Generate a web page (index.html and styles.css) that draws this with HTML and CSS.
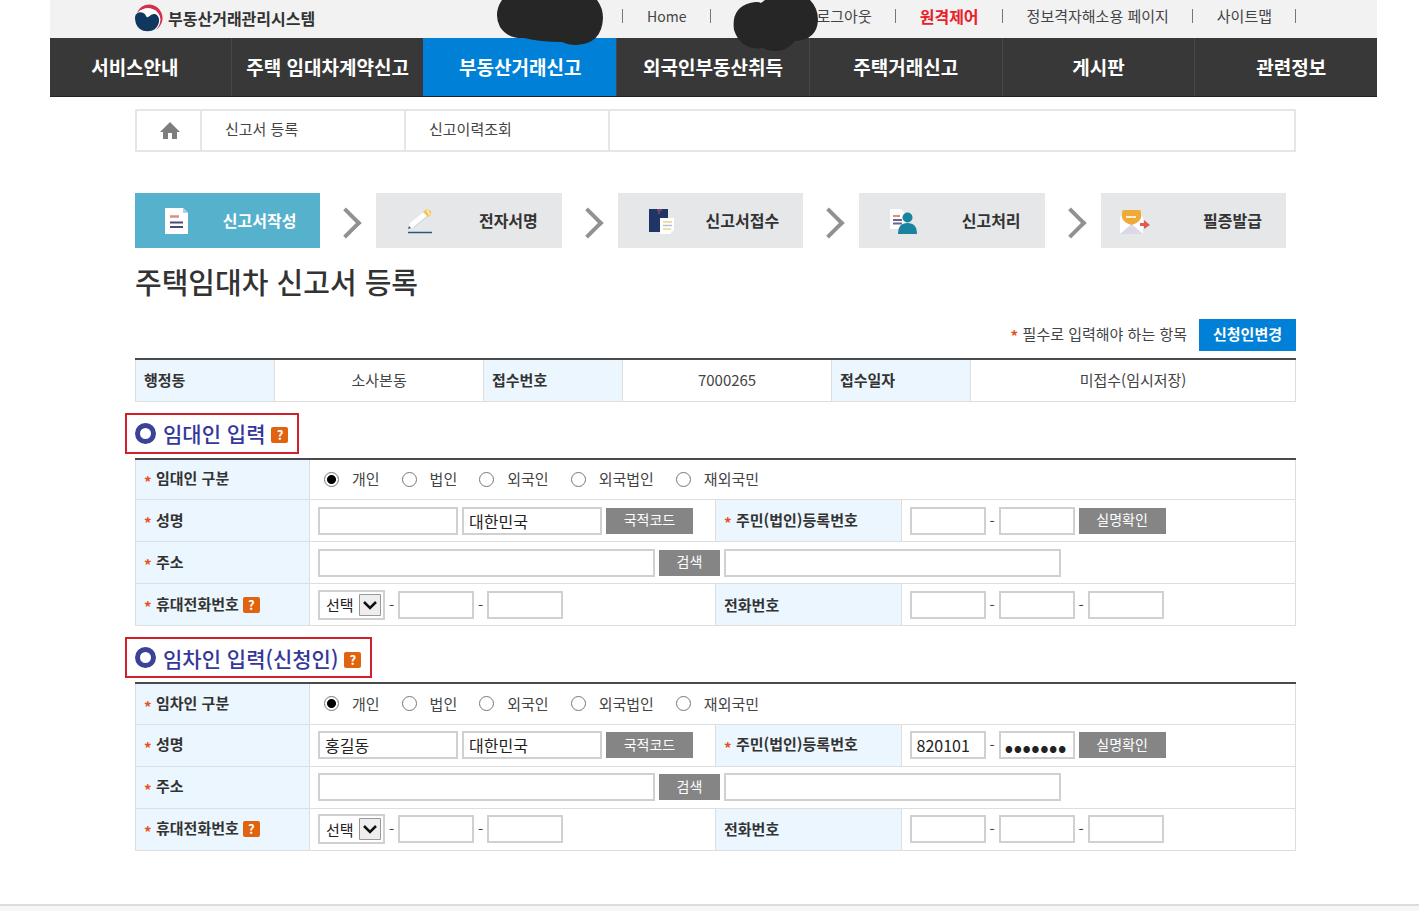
FILE: index.html
```
<!DOCTYPE html>
<html lang="ko">
<head>
	<meta charset="utf-8">
	<title>부동산거래관리시스템</title>
	<link rel="stylesheet" href="styles.css">
</head>
<body>
	<div class="page">
		<header class="top">
			<a class="logo" href="#">
				<svg width="28" height="28" viewBox="0 0 28 28">
					<path d="M2 9 C6 -1 18 -2 24 5 C30 12 28 21 21 26 C26 20 27 13 22 8 C17 3 8 3 2 9Z" fill="#d2304c"/>
					<path d="M3 9 C8 3 17 3 22 8 C27 13 26 20 21 25 L10 18Z" fill="#fff"/>
					<path d="M0 13 C1 7 9 7 11 12 C13 16 15 9 20 10 C26 12 25 21 20 25 C16 28 9 28 5 25 C1 22 0 17 0 13Z" fill="#10375f"/>
				</svg>
				<strong>부동산거래관리시스템</strong>
			</a>
			<ul class="links">
				<li class="user">
					<svg class="mask" width="108" height="46" viewBox="0 0 108 46"><path d="M6 0 H101 Q107 8 107 18 Q106 44 80 45 Q72 45 66 42 Q44 42 28 38 Q12 39 4 27 Q-3 13 6 0Z" fill="#262626"/></svg>
				</li>
				<li><a class="en" href="#">Home</a></li>
				<li class="logout">
					<svg class="mask" width="86" height="52" viewBox="0 0 86 52"><path d="M32 0 H77 Q85 8 85 20 Q84 40 62 41 Q54 51 42 51 Q34 51 30 48 Q8 51 1 30 Q-2 8 17 3 Q25 1 28 3Z" fill="#262626"/></svg>
					<a href="#">로그아웃</a>
				</li>
				<li><a class="remote" href="#">원격제어</a></li>
				<li><a href="#">정보격자해소용 페이지</a></li>
				<li><a href="#">사이트맵</a></li>
			</ul>
		</header>

		<nav class="menu">
			<ul>
				<li><a href="#">서비스안내</a></li>
				<li><a href="#">주택 임대차계약신고</a></li>
				<li class="on"><a href="#">부동산거래신고</a></li>
				<li><a href="#">외국인부동산취득</a></li>
				<li><a href="#">주택거래신고</a></li>
				<li><a href="#">게시판</a></li>
				<li><a href="#">관련정보</a></li>
			</ul>
		</nav>

		<main class="content">
			<div class="submenu">
				<a class="home" href="#" aria-label="홈">
					<svg width="20" height="18" viewBox="0 0 20 18"><path d="M10 0 L20 10 H17 V17 H12 V11 H8 V17 H3 V10 H0Z" fill="#7d7d7d"/></svg>
				</a>
				<a href="#">신고서 등록</a>
				<a href="#">신고이력조회</a>
			</div>

			<ol class="steps">
				<li class="on">
					<svg width="28" height="28" viewBox="0 0 28 28"><path d="M0 1 H18 L23 6 V27 H0Z" fill="#fff"/><path d="M18 1 V6 H23Z" fill="#a9d3e2"/><path d="M5 9.500 H14" stroke="#e58a83" stroke-width="2.500"/><path d="M5 15.500 H18 M5 20 H18" stroke="#4c4a78" stroke-width="2"/></svg>
					<span>신고서작성</span>
				</li>
				<li>
					<svg width="28" height="28" viewBox="0 0 28 28"><path d="M2 25.500 H26" stroke="#2d5480" stroke-width="1.500"/><path d="M2 22 L4 16 L19 4 L23 8 L8 20Z" fill="#fff"/><path d="M8 20 L23 8" stroke="#c9ced6"/><path d="M17 5 L21 2 L25 4 V8 L22 10Z" fill="#efc75a"/><path d="M21 3 L24 8" stroke="#fff1c0" stroke-width="1.500"/><path d="M2 22 L3 19 L5 21Z" fill="#2d5480"/></svg>
					<span>전자서명</span>
				</li>
				<li>
					<svg width="28" height="28" viewBox="0 0 28 28"><path d="M1 2 H20 V25 H1Z" fill="#1f3565"/><path d="M9 3 H14 M11 3 V7" stroke="#8c4963" stroke-width="1.500"/><path d="M12 11 H26 V23 L22 27 H12Z" fill="#fff"/><path d="M15 15 H24 M15 22 H23" stroke="#e9d48a" stroke-width="1.500"/><path d="M15 18.500 H24" stroke="#b8c0cc" stroke-width="1.500"/></svg>
					<span>신고서접수</span>
				</li>
				<li>
					<svg width="28" height="28" viewBox="0 0 28 28"><path d="M1 2 H12 L16 6 V22 H1Z" fill="#fff"/><path d="M4 9 H11" stroke="#e58a83" stroke-width="2"/><path d="M4 13 H13 M4 16.500 H13" stroke="#66678f" stroke-width="2"/><circle cx="18.500" cy="10.500" r="5" fill="#1a84a0"/><path d="M9 27 Q9 16 18.500 16 Q28 16 28 27Z" fill="#1a84a0"/></svg>
					<span>신고처리</span>
				</li>
				<li class="last">
					<svg width="32" height="28" viewBox="0 0 32 28"><path d="M1 10 L12 4 L24 10 V27 H1Z" fill="#fff"/><path d="M1 27 L12.500 17 L24 27Z" fill="#dcd8e6"/><path d="M3 5 Q3 3 5 3 H20 Q22 3 22 5 V11 Q20 16 12.500 18 Q5 16 3 11Z" fill="#f0aa3a"/><path d="M7 10 H17" stroke="#fff0cc" stroke-width="2"/><path d="M21 16 H25 V13 L31 18 L25 22 V19 H21Z" fill="#de5b52"/></svg>
					<span>필증발급</span>
				</li>
			</ol>

			<h1>주택임대차 신고서 등록</h1>

			<div class="note">
				<p><span class="req">*</span>필수로 입력해야 하는 항목</p>
				<button class="change" type="button">신청인변경</button>
			</div>

			<table class="info">
				<colgroup>
					<col class="w12"><col class="w18"><col class="w12"><col class="w18"><col class="w12"><col>
				</colgroup>
				<tr>
					<th>행정동</th>
					<td>소사본동</td>
					<th>접수번호</th>
					<td>7000265</td>
					<th>접수일자</th>
					<td>미접수(임시저장)</td>
				</tr>
			</table>

			<form action="">
				<h2><i class="ring"></i>임대인 입력<button class="help" type="button">?</button></h2>
				<table>
					<colgroup>
						<col class="w15"><col class="w35"><col class="w16"><col>
					</colgroup>
					<tr>
						<th><span class="req">*</span>임대인 구분</th>
						<td colspan="3">
							<div class="radios">
								<label><input type="radio" name="lessor" checked>개인</label>
								<label><input type="radio" name="lessor">법인</label>
								<label><input type="radio" name="lessor">외국인</label>
								<label><input type="radio" name="lessor">외국법인</label>
								<label><input type="radio" name="lessor">재외국민</label>
							</div>
						</td>
					</tr>
					<tr>
						<th><span class="req">*</span><label for="name1">성명</label></th>
						<td>
							<div class="field">
								<input class="mid" type="text" id="name1">
								<input class="mid" type="text" value="대한민국" aria-label="국적">
								<button class="btn" type="button">국적코드</button>
							</div>
						</td>
						<th><span class="req">*</span><label for="reg1">주민(법인)등록번호</label></th>
						<td>
							<div class="field">
								<input class="num" type="text" id="reg1"><span class="dash">-</span><input class="num" type="password" aria-label="등록번호 뒷자리">
								<button class="btn" type="button">실명확인</button>
							</div>
						</td>
					</tr>
					<tr>
						<th><span class="req">*</span><label for="addr1">주소</label></th>
						<td colspan="3">
							<div class="field">
								<input class="long" type="text" id="addr1">
								<button class="btn small" type="button">검색</button>
								<input class="long" type="text" aria-label="상세주소">
							</div>
						</td>
					</tr>
					<tr>
						<th><span class="req">*</span><label for="mobile1">휴대전화번호</label><button class="help" type="button">?</button></th>
						<td>
							<div class="field">
								<span class="select">
									<select id="mobile1"><option>선택</option></select>
									<svg width="22" height="22" viewBox="0 0 22 22"><path d="M.5 .5 H21.500 V21.500 H.5Z" fill="#eee" stroke="#999"/><path d="M5 8 L11 14 L17 8" fill="none" stroke="#111" stroke-width="2.500"/></svg>
								</span><span class="dash">-</span><input class="num" type="text" aria-label="휴대전화 가운데"><span class="dash">-</span><input class="num" type="text" aria-label="휴대전화 끝">
							</div>
						</td>
						<th><label for="tel1">전화번호</label></th>
						<td>
							<div class="field">
								<input class="num" type="text" id="tel1"><span class="dash">-</span><input class="num" type="text" aria-label="전화 가운데"><span class="dash">-</span><input class="num" type="text" aria-label="전화 끝">
							</div>
						</td>
					</tr>
				</table>

				<h2><i class="ring"></i>임차인 입력(신청인)<button class="help" type="button">?</button></h2>
				<table>
					<colgroup>
						<col class="w15"><col class="w35"><col class="w16"><col>
					</colgroup>
					<tr>
						<th><span class="req">*</span>임차인 구분</th>
						<td colspan="3">
							<div class="radios">
								<label><input type="radio" name="lessee" checked>개인</label>
								<label><input type="radio" name="lessee">법인</label>
								<label><input type="radio" name="lessee">외국인</label>
								<label><input type="radio" name="lessee">외국법인</label>
								<label><input type="radio" name="lessee">재외국민</label>
							</div>
						</td>
					</tr>
					<tr>
						<th><span class="req">*</span><label for="name2">성명</label></th>
						<td>
							<div class="field">
								<input class="mid" type="text" id="name2" value="홍길동">
								<input class="mid" type="text" value="대한민국" aria-label="국적">
								<button class="btn" type="button">국적코드</button>
							</div>
						</td>
						<th><span class="req">*</span><label for="reg2">주민(법인)등록번호</label></th>
						<td>
							<div class="field">
								<input class="num" type="text" id="reg2" value="820101"><span class="dash">-</span><input class="num" type="password" value="1234567" aria-label="등록번호 뒷자리">
								<button class="btn" type="button">실명확인</button>
							</div>
						</td>
					</tr>
					<tr>
						<th><span class="req">*</span><label for="addr2">주소</label></th>
						<td colspan="3">
							<div class="field">
								<input class="long" type="text" id="addr2">
								<button class="btn small" type="button">검색</button>
								<input class="long" type="text" aria-label="상세주소">
							</div>
						</td>
					</tr>
					<tr>
						<th><span class="req">*</span><label for="mobile2">휴대전화번호</label><button class="help" type="button">?</button></th>
						<td>
							<div class="field">
								<span class="select">
									<select id="mobile2"><option>선택</option></select>
									<svg width="22" height="22" viewBox="0 0 22 22"><path d="M.5 .5 H21.500 V21.500 H.5Z" fill="#eee" stroke="#999"/><path d="M5 8 L11 14 L17 8" fill="none" stroke="#111" stroke-width="2.500"/></svg>
								</span><span class="dash">-</span><input class="num" type="text" aria-label="휴대전화 가운데"><span class="dash">-</span><input class="num" type="text" aria-label="휴대전화 끝">
							</div>
						</td>
						<th><label for="tel2">전화번호</label></th>
						<td>
							<div class="field">
								<input class="num" type="text" id="tel2"><span class="dash">-</span><input class="num" type="text" aria-label="전화 가운데"><span class="dash">-</span><input class="num" type="text" aria-label="전화 끝">
							</div>
						</td>
					</tr>
				</table>
			</form>
		</main>
	</div>
	<footer></footer>
</body>
</html>
```
FILE: styles.css
```
* {
	box-sizing: border-box;
}
body {
	margin: 0;
	background: #fff;
	color: #444;
	font-family: "Noto Sans CJK KR", sans-serif;
	font-size: 15px;
	line-height: 20px;
}
ul, ol {
	margin: 0;
	padding: 0;
	list-style: none;
}
a {
	color: inherit;
	text-decoration: none;
}
input, select, button {
	font-family: inherit;
	border-radius: 0;
}
svg {
	display: block;
	flex: none;
}
.page {
	margin: 0 42px 0 50px;
}

/* top bar */
.top {
	display: flex;
	justify-content: space-between;
	height: 38px;
	padding: 0 81px 4px 85px;
	background: #f2f2f2;
}
.logo {
	display: flex;
	align-items: center;
	gap: 5px;
	padding-top: 2px;
	color: #333;
}
.logo strong {
	font-size: 16px;
}
.links {
	display: flex;
	align-items: center;
	padding-bottom: 2px;
}
.links li {
	position: relative;
	padding: 0 24px;
}
.links li::after {
	content: "";
	position: absolute;
	right: 0;
	top: 3px;
	width: 1px;
	height: 14px;
	background: #777;
}
.links .user {
	height: 20px;
	width: 130px;
}
.links .logout {
	padding-left: 106px;
}
.links .en {
	font-size: 14px;
}
.mask {
	position: absolute;
	z-index: 2;
	top: -6px;
}
.user .mask {
	left: 3px;
}
.logout .mask {
	left: 22px;
}
.remote {
	color: #e8202a;
	font-size: 16px;
	font-weight: bold;
}

/* main menu */
.menu {
	overflow: hidden;
	background: #383838;
	border-bottom: 1px solid #222;
}
.menu ul {
	display: flex;
	margin: 0 -10px 0 -12px;
}
.menu li {
	flex: 1;
	border-left: 1px solid #484848;
}
.menu .on {
	background: #0080d7;
	border-color: #0080d7;
}
.menu a {
	display: block;
	color: #fff;
	font-size: 19px;
	font-weight: bold;
	line-height: 58px;
	text-align: center;
	white-space: nowrap;
}

.content {
	padding: 12px 81px 0 85px;
}
.submenu {
	display: flex;
	height: 43px;
	border: 2px solid #e6e6e6;
}
.submenu a {
	width: 204px;
	padding: 8px 0 0 23px;
	border-right: 2px solid #e6e6e6;
}
.submenu .home {
	width: 65px;
	padding-top: 11px;
}

/* steps */
.steps {
	display: grid;
	grid-template-columns: repeat(5, 1fr);
	gap: 56px;
	margin: 41px 10px 0 0;
}
.steps li {
	position: relative;
	display: flex;
	align-items: center;
	justify-content: space-between;
	height: 55px;
	padding: 0 24px 0 30px;
	background: #e6e7e9;
	color: #333;
	font-size: 16px;
	font-weight: bold;
}
.steps span {
	padding-bottom: 2px;
}
.steps .on {
	background: #56b1cd;
	color: #fff;
}
.steps .last {
	padding-left: 18px;
}
/* chevron between two steps */
.steps li + li::before {
	content: "";
	position: absolute;
	left: -41px;
	top: 19px;
	width: 18px;
	height: 18px;
	border: solid #919191;
	border-width: 4px 4px 0 0;
	transform: rotate(45deg);
}

h1 {
	margin: 13px 0 18px;
	color: #333;
	font-size: 29px;
	font-weight: 500;
	line-height: 40px;
}
.note {
	display: flex;
	justify-content: flex-end;
	align-items: center;
	gap: 12px;
	margin-bottom: 7px;
}
.note p {
	display: flex;
	margin: 0;
	padding-bottom: 2px;
}
.req {
	width: 7px;
	margin-right: 5px;
	padding-top: 4px;
	color: #e8501e;
	font-weight: bold;
	line-height: 16px;
}
.change {
	height: 32px;
	padding: 0 14px 3px;
	border: 0;
	background: #0080d7;
	color: #fff;
	font-size: 15px;
	font-weight: bold;
}

/* tables */
table {
	width: 100%;
	table-layout: fixed;
	border-collapse: collapse;
	border-top: 2px solid #4a4a4a;
}
.w12 { width: 12%; }
.w15 { width: 15%; }
.w16 { width: 16%; }
.w18 { width: 18%; }
.w35 { width: 35%; }
th, td {
	height: 42px;
	padding: 0 0 0 8px;
	border: 1px solid #dedede;
	text-align: left;
	white-space: nowrap;
}
form tr:first-child th,
form tr:first-child td {
	height: 41px;
}
th {
	background: #ecf6fe;
	color: #333;
}
th .req {
	display: inline-block;
	vertical-align: middle;
}
.info td {
	padding: 0;
	text-align: center;
}
h2 {
	display: flex;
	align-items: center;
	width: fit-content;
	height: 41px;
	margin: 11px 0 4px -10px;
	padding: 0 9px 0 8px;
	border: 2px solid #d0202c;
	color: #34389a;
	font-size: 21px;
	font-weight: 500;
}
.ring {
	width: 21px;
	height: 21px;
	margin-right: 7px;
	border: 5px solid #3b4298;
	border-radius: 50%;
}
.help {
	width: 17px;
	height: 16px;
	margin-left: 6px;
	padding: 0;
	border: 0;
	border-radius: 2px;
	background: #e0640f;
	color: #fff;
	font-size: 13px;
	font-weight: bold;
	line-height: 16px;
}
h2 .help {
	margin-top: 4px;
}
th .help {
	margin-left: 4px;
}

/* form fields */
.radios {
	display: flex;
	gap: 22px;
	padding-left: 6px;
}
.radios label {
	display: flex;
	align-items: center;
	gap: 13px;
}
.radios input {
	appearance: none;
	width: 15px;
	height: 15px;
	margin: 0;
	border: 1px solid #777;
	border-radius: 50%;
	background: #fff;
}
.radios input:checked {
	background: radial-gradient(#000 4px, #fff 5px);
}
.field {
	display: flex;
	align-items: center;
	gap: 4px;
}
.field input {
	height: 28px;
	padding: 0 5px;
	border: 2px solid #d0d0d0;
	background: #fff;
	color: #222;
	font-size: 16px;
}
.field .mid { width: 140px; }
.field .long { width: 337px; }
.field .num { width: 76px; }
.field input[type="password"] {
	padding: 0 4px;
	font-size: 26px;
}
.field .dash {
	width: 13px;
	margin: 0 -4px;
	text-align: center;
}
.btn {
	width: 87px;
	height: 26px;
	padding: 0 0 3px;
	border: 0;
	background: #858585;
	color: #fff;
	font-size: 14px;
}
.btn.small {
	width: 61px;
}
.select {
	position: relative;
}
.select select {
	display: block;
	appearance: none;
	width: 67px;
	height: 30px;
	padding: 0 0 0 6px;
	border: 2px solid #d0d0d0;
	background: #fff;
	color: #222;
	font-size: 15px;
}
.select svg {
	position: absolute;
	right: 4px;
	top: 4px;
	pointer-events: none;
}

footer {
	height: 8px;
	margin-top: 53px;
	border-top: 2px solid #dcdcdc;
	background: #f6f6f6;
}
```
